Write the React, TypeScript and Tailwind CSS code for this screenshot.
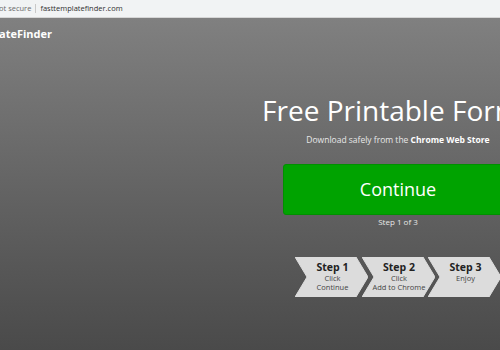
import React from "react";

const steps = [
  { title: "Step 1", lines: ["Click", "Continue"] },
  { title: "Step 2", lines: ["Click", "Add to Chrome"] },
  { title: "Step 3", lines: ["Enjoy"] },
];

function Chevron({ title, lines }: { title: string; lines: string[] }) {
  return (
    <div className="relative w-[73px] h-[40px] shrink-0">
      <svg width="73" height="40" viewBox="0 0 73 40" className="absolute inset-0">
        <polygon points="0,0 61,0 73,20 61,40 0,40 12,20" fill="#dcdcdc" stroke="#dcdcdc" strokeWidth="1" strokeLinejoin="round" />
      </svg>
      <div className="relative flex flex-col items-center pt-[4px] pl-[2px] leading-none">
        <div className="text-[10.5px] font-bold text-[#222] leading-[13px]">{title}</div>
        {lines.map((l) => (
          <div key={l} className="text-[7.5px] text-[#444] leading-[9px]">{l}</div>
        ))}
      </div>
    </div>
  );
}

export default function App() {
  return (
    <div className="w-[500px] h-[350px] overflow-hidden flex flex-col" style={{ fontFamily: '"Open Sans", "Noto Sans", sans-serif' }}>
      <div className="h-[18px] shrink-0 bg-[#f1f3f4] border-b border-[#d6d6d6] flex items-center text-[7.5px] leading-none">
        <span className="text-[#6b6b6b] -ml-[1px]">ot secure</span>
        <span className="mx-[4px] w-px h-[9px] bg-[#c8c8c8]" />
        <span className="text-[#303030]">fasttemplatefinder.com</span>
      </div>
      <div className="flex-1 bg-gradient-to-b from-[#808080] to-[#4a4a4a] relative">
        <div className="absolute left-[-1px] top-[10px] text-white font-bold text-[11px] leading-none">ateFinder</div>
        <div className="ml-[263px] w-[270px] pt-[75px] flex flex-col items-center">
          <div className="text-white text-[28px] leading-[34px] whitespace-nowrap">Free Printable Forms</div>
          <div className="mt-[7px] text-[#e8e8e8] text-[8.5px] leading-[11px] whitespace-nowrap">
            Download safely from the <span className="font-bold text-white">Chrome Web Store</span>
          </div>
          <div className="mt-[19px] w-[230px] h-[51px] bg-[#00a300] border border-[#009000] rounded-[3px] flex items-center justify-center text-white text-[18px]">
            Continue
          </div>
          <div className="mt-[1px] text-[#e8e8e8] text-[8px] leading-[11px]">Step 1 of 3</div>
          <div className="mt-[30px] flex">
            {steps.map((s, i) => (
              <div key={s.title} className={i > 0 ? "-ml-[6.5px]" : ""}>
                <Chevron {...s} />
              </div>
            ))}
          </div>
        </div>
      </div>
    </div>
  );
}
